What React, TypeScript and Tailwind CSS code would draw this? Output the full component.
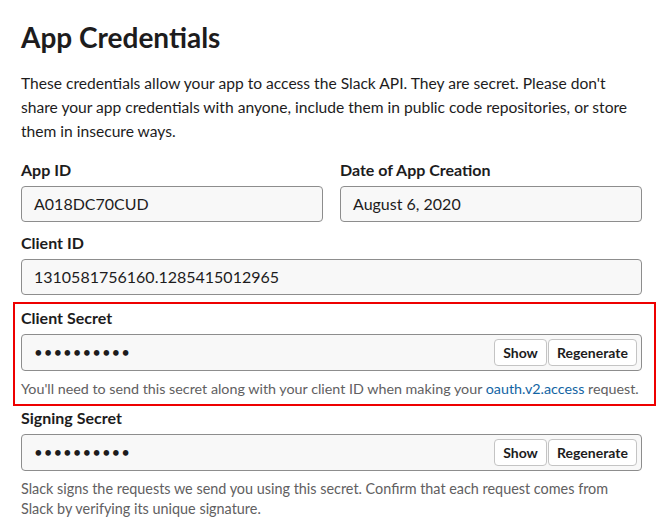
const font = { fontFamily: "Lato, 'Open Sans', sans-serif" };

function Field({ value }: { value: string }) {
  return (
    <div className="mt-[5px] flex h-[36px] items-center rounded-[4px] border border-[#8d8d8d] bg-[#f8f8f8] px-[12px] text-[16px] text-[#1d1c1d]">
      {value}
    </div>
  );
}

function SecretField() {
  return (
    <div className="mt-[5px] flex h-[37px] items-center justify-between rounded-[4px] border border-[#8d8d8d] bg-[#f8f8f8] pl-[12px] pr-[4px] text-[#1d1c1d]">
      <span className="text-[15px] tracking-[1px]">••••••••••</span>
      <div className="flex gap-[1px]">
        <button className="h-[27px] w-[53px] rounded-[4px] border border-[#c4c4c4] bg-white text-[14px] font-bold">
          Show
        </button>
        <button className="h-[27px] w-[89px] rounded-[4px] border border-[#c4c4c4] bg-white text-[14px] font-bold">
          Regenerate
        </button>
      </div>
    </div>
  );
}

function Label({ children }: { children: string }) {
  return <div className="text-[16px] font-bold leading-[22px] text-[#1d1c1d]">{children}</div>;
}

export default function App() {
  return (
    <div style={font} className="min-h-[532px] w-[669px] bg-white pl-[21px] pt-[19px] text-[#1d1c1d]">
      <div className="w-[621px]">
        <h1 className="text-[28px] font-bold leading-[36px]">App Credentials</h1>
        <p className="mt-[16px] text-[15.6px] leading-[24px]">
          These credentials allow your app to access the Slack API. They are secret. Please don't
          share your app credentials with anyone, include them in public code repositories, or store
          them in insecure ways.
        </p>

        <div className="mt-[16px] grid grid-cols-2 gap-x-[17px]">
          <div>
            <Label>App ID</Label>
            <Field value="A018DC70CUD" />
          </div>
          <div>
            <Label>Date of App Creation</Label>
            <Field value="August 6, 2020" />
          </div>
        </div>

        <div className="mt-[10px]">
          <Label>Client ID</Label>
          <Field value="1310581756160.1285415012965" />
        </div>

        {/* highlighted block: red outline sits 8px left of the column, content stays aligned */}
        <div className="mt-[7px] ml-[-8px] w-[643px] border-2 border-[#ee0000] pb-[5px] pl-[6px] pt-[3px]">
          <div className="w-[621px]">
            <Label>Client Secret</Label>
            <SecretField />
            <p className="mt-[8px] whitespace-nowrap text-[14.3px] leading-[20px] text-[#616061]">
              You'll need to send this secret along with your client ID when making your{" "}
              <span className="text-[#1264a3]">oauth.v2.access</span> request.
            </p>
          </div>
        </div>

        <div className="mt-[1px]">
          <Label>Signing Secret</Label>
          <SecretField />
          <p className="mt-[8px] text-[14.4px] leading-[20px] text-[#616061]">
            Slack signs the requests we send you using this secret. Confirm that each request comes from
            Slack by verifying its unique signature.
          </p>
        </div>
      </div>
    </div>
  );
}
